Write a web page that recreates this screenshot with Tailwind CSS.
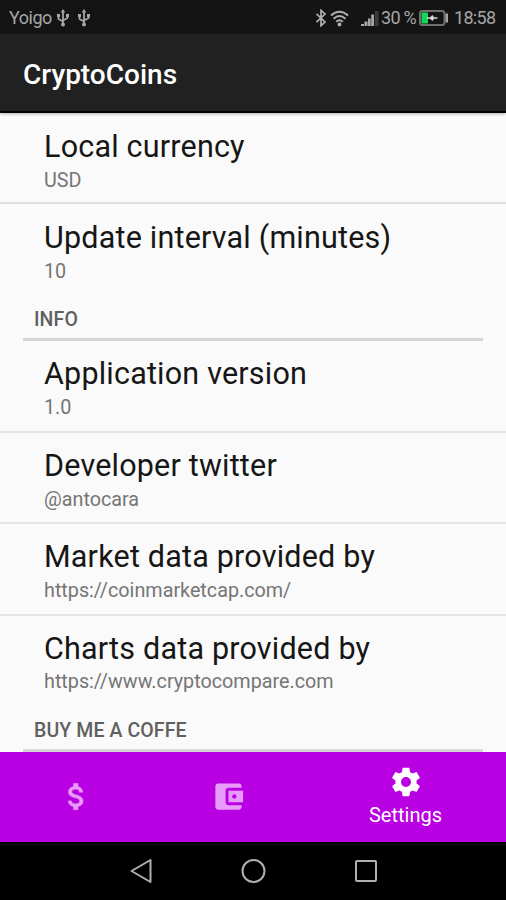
<!DOCTYPE html>
<html lang="en">
<head>
<meta charset="utf-8">
<title>CryptoCoins</title>
<script src="https://cdn.jsdelivr.net/npm/@tailwindcss/browser@4"></script>
</head>
<body class="w-[506px] h-[900px] overflow-hidden bg-[#fafafa] font-['Roboto',sans-serif] flex flex-col">
  <!-- Status bar -->
  <div class="h-[34px] shrink-0 bg-[#141414] text-[#a6a6a6] flex items-center pl-[9px] pr-[11px] pt-[2px] text-[18px] leading-none whitespace-nowrap">
    <span class="w-[43px] tracking-[-0.5px]">Yoigo</span>
    <svg class="ml-[4px] w-[14px] h-[18px]" viewBox="0 0 14 18" fill="none" stroke="#a6a6a6" stroke-width="1.800"><path d="M7 3v12M2.500 7v3L7 12.500M11.500 6v3L7 11.500"/><path d="M7 0l2.300 3.600H4.700z" fill="#a6a6a6" stroke="none"/><circle cx="7" cy="15.500" r="2" fill="#a6a6a6" stroke="none"/><path d="M1 5h3v3H1zM10 5h3v3h-3z" fill="#a6a6a6" stroke="none"/></svg>
    <svg class="ml-[7px] w-[14px] h-[18px]" viewBox="0 0 14 18" fill="none" stroke="#a6a6a6" stroke-width="1.800"><path d="M7 3v12M2.500 7v3L7 12.500M11.500 6v3L7 11.500"/><path d="M7 0l2.300 3.600H4.700z" fill="#a6a6a6" stroke="none"/><circle cx="7" cy="15.500" r="2" fill="#a6a6a6" stroke="none"/><path d="M1 5h3v3H1zM10 5h3v3h-3z" fill="#a6a6a6" stroke="none"/></svg>
    <div class="ml-auto flex items-center">
      <svg class="w-[12px] h-[18px]" viewBox="0 0 12 18" fill="none" stroke="#b0b0b0" stroke-width="1.700"><path d="M1.500 4.800L10 13l-4 3.700V1.300L10 5 1.500 13.200"/></svg>
      <svg class="ml-[3px] w-[19px] h-[17px]" viewBox="0 0 19 17" fill="none" stroke="#b0b0b0" stroke-width="2"><path d="M1 5.500Q9.500-2 18 5.500M3.600 8.700Q9.500 3.200 15.400 8.700M6.200 11.700Q9.500 8.700 12.800 11.700"/><circle cx="9.500" cy="14.500" r="1.900" fill="#b0b0b0" stroke="none"/></svg>
      <svg class="ml-[12px] w-[18px] h-[17px]" viewBox="0 0 18 17" fill="#a6a6a6"><path d="M0 14h3v2H0zM3.500 11.500h3V16h-3zM7 8.500h2.700V16H7zM10.200 4.500H13V16h-2.800z"/><path d="M13.800 1H17.500v15h-3.700z" fill="#3b3b3b"/></svg>
      <span class="ml-[2px] w-[35px] tracking-[-0.7px]">30 %</span>
      <svg class="ml-[3px] w-[29px] h-[16px]" viewBox="0 0 29 16"><rect x="1" y="1" width="24.500" height="14" rx="2.500" fill="#141414" stroke="#707070" stroke-width="2"/><path d="M2.500 2.500H9v11H2.500z" fill="#14d45c"/><path d="M26.500 3.500H29v9h-2.500z" fill="#a6a6a6"/><path d="M8 7.300h3l2.500-2.300 1.500 2.300h3.500v1.400H15L13.500 11 11 8.700H8z" fill="#d8d8d8"/></svg>
      <span class="ml-[6px] w-[41px] tracking-[-0.700px]">18:58</span>
    </div>
  </div>
  <!-- App bar -->
  <header class="relative z-10 h-[79px] shrink-0 bg-[#212121] border-b-2 border-black shadow-[0_1px_3px_rgba(0,0,0,0.3)] flex items-center pl-[23px] pt-[5px]">
    <h1 class="text-[28px] font-medium text-white leading-none">CryptoCoins</h1>
  </header>
  <!-- Preferences -->
  <main class="h-[639px] shrink-0 overflow-hidden text-[#161616]">
    <section>
      <div class="h-[91px] border-b-2 border-[#e0e0e0] pl-[44px] pt-[16px]"><div class="text-[30.500px] tracking-[0.2px] leading-[36px]">Local currency</div><div class="text-[19.750px] leading-[24px] mt-[4px] text-[#757575]">USD</div></div>
      <div class="h-[91px] pl-[44px] pt-[16px]"><div class="text-[30.500px] tracking-[0.2px] leading-[36px]">Update interval (minutes)</div><div class="text-[19.750px] leading-[24px] mt-[4px] text-[#757575]">10</div></div>
    </section>
    <section>
      <h2 class="mx-[23px] h-[46px] border-b-3 border-[#d4d4d4] pl-[11px] pt-[13px] text-[19.500px] tracking-[0.1px] leading-[24px] font-medium text-[#606060]">INFO</h2>
      <div class="h-[92px] border-b-2 border-[#e4e4e4] pl-[44px] pt-[15px]"><div class="text-[30.500px] tracking-[0.2px] leading-[36px]">Application version</div><div class="text-[19.750px] leading-[24px] mt-[4px] text-[#757575]">1.0</div></div>
      <div class="h-[91px] border-b-2 border-[#e4e4e4] pl-[44px] pt-[15px]"><div class="text-[30.500px] tracking-[0.2px] leading-[36px]">Developer twitter</div><div class="text-[19.750px] leading-[24px] mt-[4px] text-[#757575]">@antocara</div></div>
      <div class="h-[92px] border-b-2 border-[#e4e4e4] pl-[44px] pt-[15px]"><div class="text-[30.500px] tracking-[0.2px] leading-[36px]">Market data provided by</div><div class="text-[19.750px] leading-[24px] mt-[4px] text-[#757575]">https://coinmarketcap.com/</div></div>
      <div class="h-[90px] pl-[44px] pt-[15px]"><div class="text-[30.500px] tracking-[0.2px] leading-[36px]">Charts data provided by</div><div class="text-[19.750px] leading-[24px] mt-[3px] text-[#757575]">https://www.cryptocompare.com</div></div>
    </section>
    <h2 class="mx-[23px] h-[46px] border-b-3 border-[#d8d6d6] pl-[11px] pt-[13px] text-[19.500px] tracking-[0.1px] leading-[24px] font-medium text-[#606060]">BUY ME A COFFE</h2>
  </main>
  <!-- Bottom navigation -->
  <nav class="h-[90px] shrink-0 bg-[#b900e3] flex">
    <div class="w-[152px] pb-[2px] flex items-center justify-center"><svg class="w-[35px] h-[35px]" viewBox="0 0 24 24" fill="#e89bfa" stroke="#e89bfa" stroke-width="0.400"><path d="M11.800 10.900c-2.270-.59-3-1.200-3-2.150 0-1.090 1.010-1.850 2.700-1.850 1.780 0 2.440.85 2.500 2.100h2.210c-.07-1.720-1.120-3.300-3.210-3.810V3h-3v2.160c-1.940.42-3.500 1.680-3.500 3.610 0 2.310 1.910 3.460 4.700 4.130 2.500.6 3 1.480 3 2.410 0 .69-.49 1.790-2.700 1.790-2.060 0-2.870-.92-2.980-2.100h-2.200c.12 2.190 1.760 3.420 3.680 3.830V21h3v-2.150c1.950-.37 3.500-1.500 3.500-3.550 0-2.840-2.430-3.810-4.700-4.400z"/></svg></div>
    <div class="w-[153px] pb-[2px] flex items-center justify-center"><svg class="w-[35px] h-[35px]" viewBox="0 0 24 24" fill="#e89bfa"><path d="M21 18v1c0 1.100-.9 2-2 2H5c-1.110 0-2-.9-2-2V5c0-1.100.89-2 2-2h14c1.100 0 2 .9 2 2v1h-9c-1.110 0-2 .9-2 2v8c0 1.100.89 2 2 2h9zm-9-2h10V8H12v8zm4-2.500c-.83 0-1.500-.67-1.500-1.500s.67-1.500 1.500-1.500 1.500.67 1.500 1.500-.67 1.500-1.500 1.500z"/></svg></div>
    <div class="flex-1 flex flex-col items-center pt-[13px] text-white"><svg class="w-[34px] h-[34px]" viewBox="0 0 24 24" fill="#fff"><path d="M19.430 12.980c.04-.32.07-.64.07-.98s-.03-.66-.07-.98l2.110-1.650c.19-.15.24-.42.12-.64l-2-3.460c-.12-.22-.39-.3-.61-.22l-2.490 1c-.52-.4-1.080-.73-1.690-.98l-.38-2.650C14.460 2.180 14.250 2 14 2h-4c-.25 0-.46.18-.49.42l-.38 2.650c-.61.25-1.170.59-1.690.98l-2.490-1c-.23-.09-.49 0-.61.22l-2 3.460c-.13.22-.07.49.12.64l2.110 1.650c-.04.32-.07.65-.07.98s.03.66.07.98l-2.110 1.650c-.19.15-.24.42-.12.64l2 3.460c.12.22.39.3.61.22l2.490-1c.52.4 1.080.73 1.690.98l.38 2.650c.03.24.24.42.49.42h4c.25 0 .46-.18.49-.42l.38-2.650c.61-.25 1.170-.59 1.690-.98l2.490 1c.23.09.49 0 .61-.22l2-3.460c.12-.22.07-.49-.12-.64l-2.110-1.650zM12 15.500c-1.930 0-3.500-1.570-3.500-3.500s1.570-3.500 3.500-3.500 3.500 1.570 3.500 3.500-1.570 3.500-3.500 3.500z"/></svg><span class="mt-[4px] text-[20px] leading-[24px]">Settings</span></div>
  </nav>
  <!-- System navigation -->
  <div class="flex-1 bg-black flex items-center pl-[129px]">
    <svg class="w-[24px] h-[26px]" viewBox="0 0 24 26" fill="none" stroke="#b0b0b0" stroke-width="2" stroke-linejoin="round"><path d="M21.500 2v22L2.500 13z"/></svg>
    <svg class="ml-[88px] w-[26px] h-[26px]" viewBox="0 0 26 26" fill="none" stroke="#b0b0b0" stroke-width="2"><circle cx="12.500" cy="13" r="11"/></svg>
    <svg class="ml-[87px] w-[24px] h-[24px]" viewBox="0 0 24 24" fill="none" stroke="#b0b0b0" stroke-width="2"><rect x="2" y="2" width="20" height="20" rx="1"/></svg>
  </div>
</body>
</html>
